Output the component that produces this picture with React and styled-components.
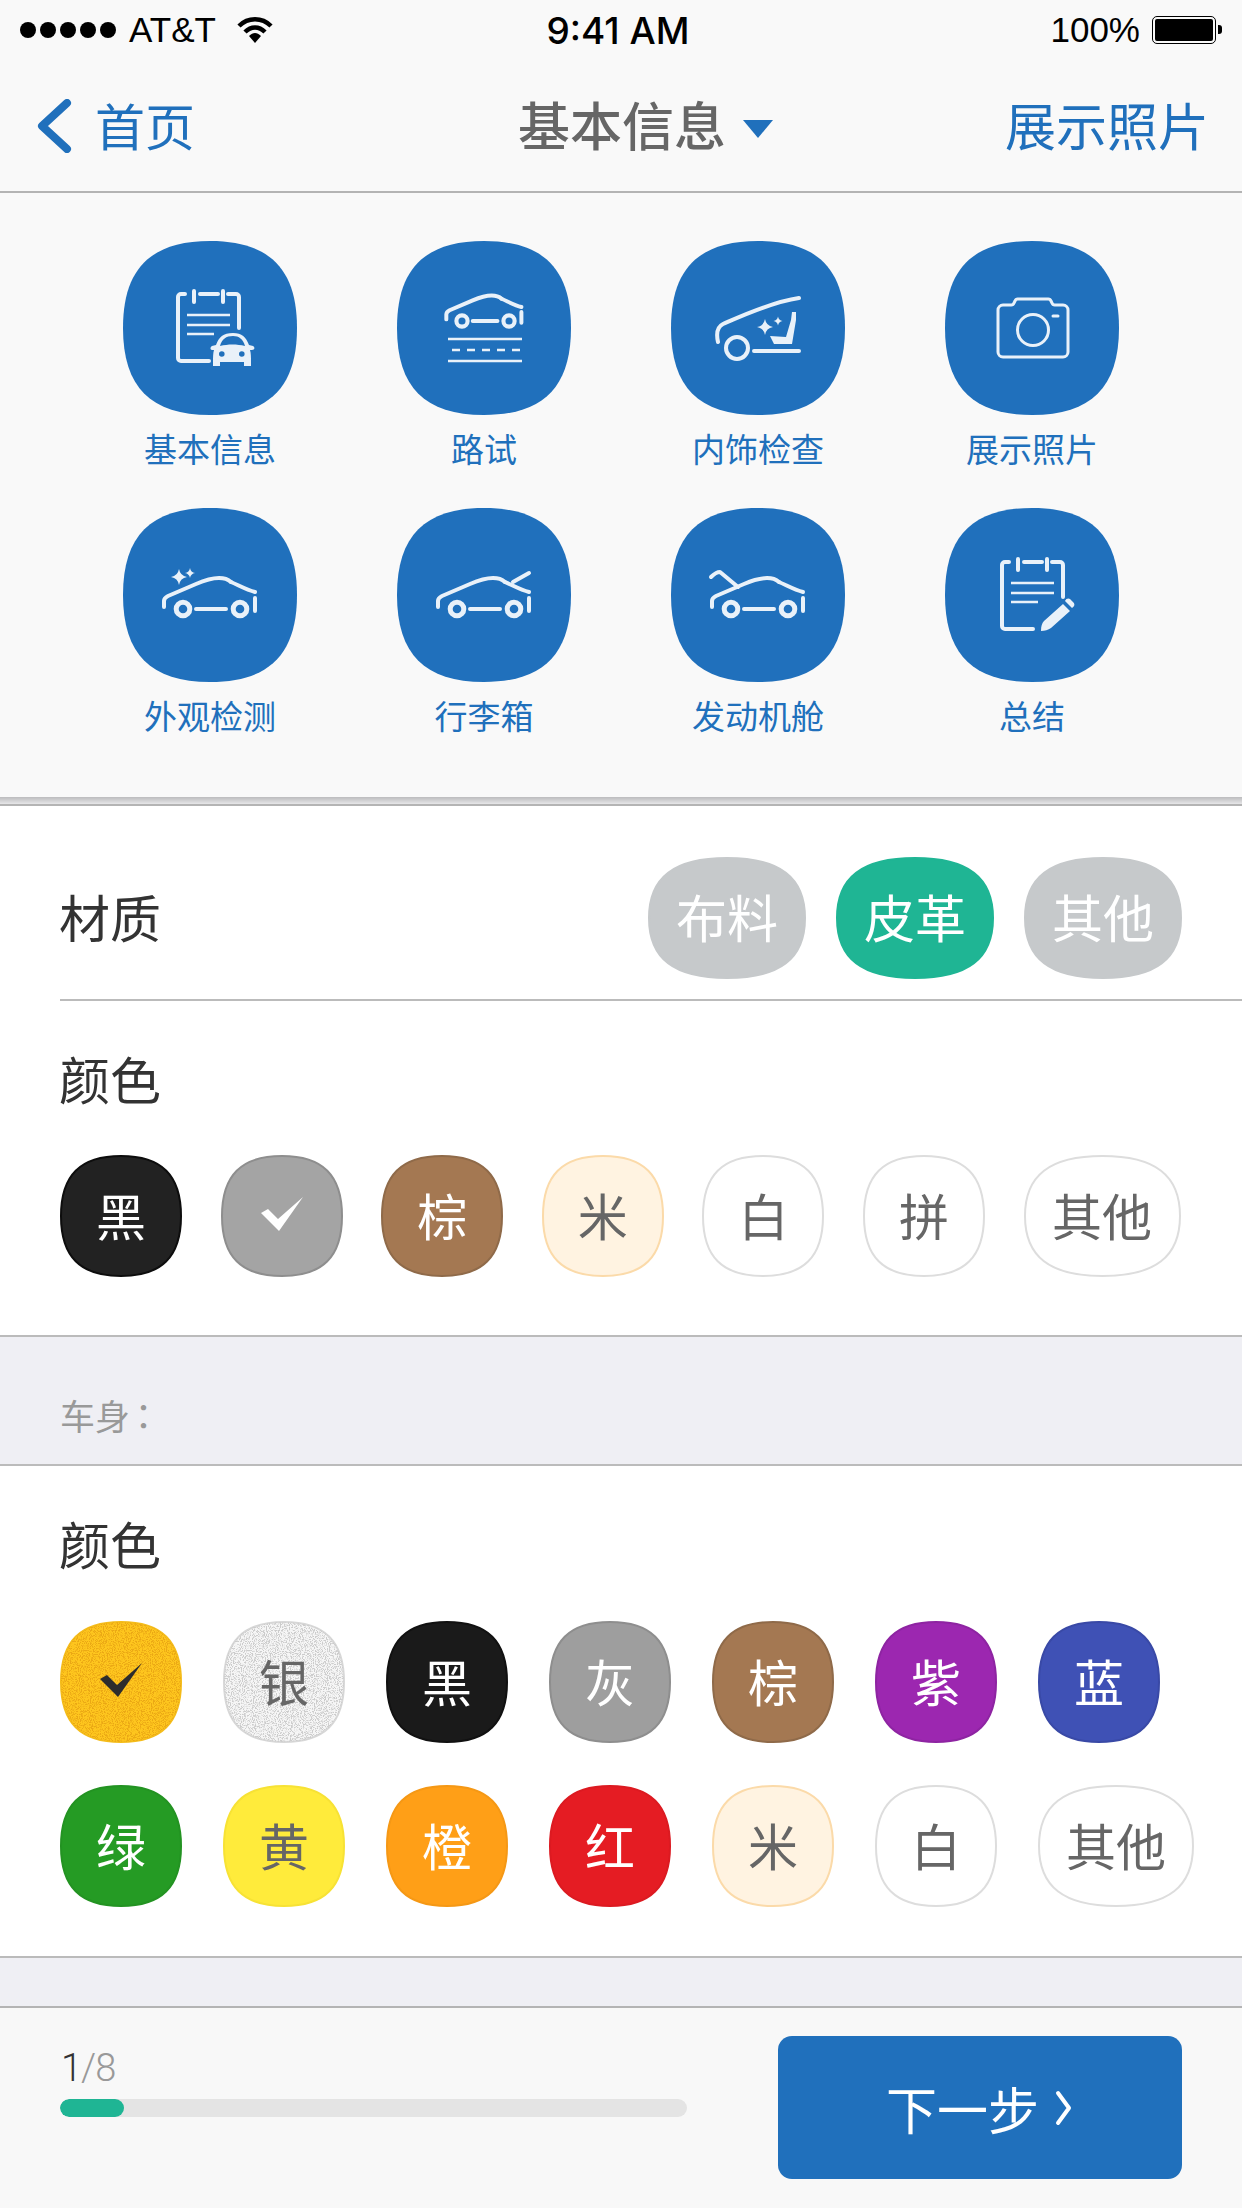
import React from "react";
import styled, { createGlobalStyle } from "styled-components";

const BLUE = "#2070bc";
const TEAL = "#1fb594";
const INK = "#e9f1f9";
const SQUIRCLE = "M50 0C84 0 100 16 100 50C100 84 84 100 50 100C16 100 0 84 0 50C0 16 16 0 50 0Z";

const GlobalStyle = createGlobalStyle`
  html, body {
    margin: 0;
    padding: 0;
    background: #fff;
  }
  * {
    box-sizing: border-box;
  }
`;

const Page = styled.div`
  width: 1242px;
  height: 2208px;
  overflow: hidden;
  background: #fff;
  display: flex;
  flex-direction: column;
  font-family: "Noto Sans CJK SC", "Liberation Sans", sans-serif;
`;

const Header = styled.div`
  background: #f9f9f9;
  border-bottom: 2px solid #b4b4b4;
`;

const StatusBar = styled.div`
  height: 60px;
  padding: 0 20px;
  display: grid;
  grid-template-columns: 1fr auto 1fr;
  align-items: center;
  font-family: "Liberation Sans", Arial, sans-serif;
  font-size: 35px;
  color: #000;
`;

const StatusLeft = styled.div`
  display: flex;
  align-items: center;
`;

const StatusRight = styled.div`
  display: flex;
  align-items: center;
  justify-content: flex-end;
  padding-right: 6px;
`;

const Dots = styled.div`
  display: flex;
  gap: 4px;
  margin-right: 13px;
`;

const Dot = styled.span`
  width: 16px;
  height: 16px;
  border-radius: 50%;
  background: #000;
`;

const Wifi = styled.svg`
  width: 38px;
  height: 28px;
  margin-left: 20px;
`;

const Time = styled.div`
  font-family: Inter, "Liberation Sans", sans-serif;
  font-weight: 500;
  font-size: 37px;
  margin-right: 6px;
`;

const Battery = styled.div`
  position: relative;
  width: 64px;
  height: 28px;
  margin-left: 12px;
  padding: 2px;
  border: 1.5px solid #000;
  border-radius: 5px;
  &::after {
    content: "";
    position: absolute;
    right: -7px;
    top: 8px;
    width: 4px;
    height: 9px;
    background: #000;
    border-radius: 0 3px 3px 0;
  }
`;

const BatteryFill = styled.div`
  height: 100%;
  background: #000;
  border-radius: 2px;
`;

const NavBar = styled.div`
  height: 131px;
  padding: 0 33px 4px 35px;
  display: grid;
  grid-template-columns: 1fr auto 1fr;
  align-items: center;
  font-size: 50px;
  line-height: 70px;
`;

const BackLink = styled.div`
  display: flex;
  align-items: center;
  gap: 22px;
  color: ${BLUE};
`;

const BackChevron = styled.svg`
  width: 38px;
  height: 54px;
  margin-top: 4px;
`;

const Title = styled.div`
  position: relative;
  color: #666;
  font-weight: 500;
  font-size: 52px;
  &::after {
    content: "";
    position: absolute;
    left: calc(100% + 17px);
    top: 31px;
    border-style: solid;
    border-width: 18px 15px 0;
    border-color: ${BLUE} transparent transparent;
  }
`;

const NavAction = styled.div`
  justify-self: end;
  color: ${BLUE};
  font-size: 51px;
`;

const Panel = styled.div`
  height: 604px;
  padding: 48px 0 0 73px;
  background: #f9f9f9;
  display: grid;
  grid-template-columns: repeat(4, 274px);
  grid-auto-rows: 267px;
`;

const PanelItem = styled.div`
  display: flex;
  flex-direction: column;
  align-items: center;
`;

const IconTile = styled.div`
  position: relative;
  width: 174px;
  height: 174px;
`;

const Shape = styled.svg`
  position: absolute;
  inset: 0;
  width: 100%;
  height: 100%;
  overflow: visible;
`;

const TileShape = styled(Shape)`
  inset: 1px;
  width: calc(100% - 2px);
  height: calc(100% - 2px);
`;

const Glyph = styled.svg`
  position: absolute;
  inset: 0;
  width: 100%;
  height: 100%;
  fill: none;
  stroke: ${INK};
  stroke-width: 4;
  stroke-linecap: round;
  stroke-linejoin: round;
`;

const Thin = styled.g`
  stroke-width: 2.7;
  stroke-linecap: butt;
`;

const Solid = styled.g`
  fill: ${INK};
  stroke: none;
`;

const PanelLabel = styled.div`
  margin-top: 11px;
  font-size: 33px;
  line-height: 44px;
  color: ${BLUE};
`;

const PanelShadow = styled.div`
  height: 9px;
  background: linear-gradient(#bcbcbe, #e6e6e8);
  border-bottom: 2px solid #b4b4b4;
`;

const MaterialRow = styled.div`
  height: 195px;
  margin-left: 60px;
  padding: 51px 60px 0 0;
  border-bottom: 2px solid #bbb;
  display: flex;
  align-items: flex-start;
  justify-content: space-between;
`;

const RowLabel = styled.div`
  margin-left: -1px;
  font-size: 51px;
  line-height: 118px;
  color: #333;
`;

const Pills = styled.div`
  display: flex;
  gap: 30px;
`;

const Tile = styled.div`
  position: relative;
  flex: none;
  width: ${(p) => p.$width}px;
  height: 122px;
  padding-bottom: 4px;
  display: flex;
  align-items: center;
  justify-content: center;
  font-size: ${(p) => p.$size}px;
  line-height: 70px;
  color: ${(p) => p.$text};
`;

const TileFill = styled.path`
  fill: ${(p) => p.$fill};
  stroke: ${(p) => p.$border};
  stroke-width: 2px;
  vector-effect: non-scaling-stroke;
`;

const TileText = styled.span`
  position: relative;
`;

const Check = styled.svg`
  position: relative;
  width: 42px;
  height: 34px;
`;

const ColorSection = styled.div`
  height: ${(p) => p.$height}px;
  padding: 42px 0 0 60px;
  border-bottom: 2px solid #bbb;
`;

const SectionTitle = styled.div`
  margin-left: -1px;
  font-size: 51px;
  line-height: 70px;
  color: #333;
`;

const SwatchGrid = styled.div`
  margin-top: ${(p) => p.$top}px;
  display: flex;
  flex-direction: column;
  gap: 42px;
`;

const SwatchRow = styled.div`
  display: flex;
  gap: ${(p) => p.$gap}px;
`;

const GroupHeader = styled.div`
  height: 129px;
  padding: 48px 0 0 60px;
  background: #efeff4;
  border-bottom: 2px solid #bbb;
  font-size: 35px;
  line-height: 60px;
  color: #999;
`;

const GroupColon = styled.span`
  margin-left: -4px;
  font-family: "Noto Sans CJK TC", sans-serif;
`;

const Spacer = styled.div`
  height: 50px;
  background: #efeff4;
  border-bottom: 2px solid #b4b4b4;
`;

const Footer = styled.div`
  flex: 1;
  padding: 28px 60px 0;
  background: #f8f8f8;
  display: flex;
  justify-content: space-between;
  align-items: flex-start;
`;

const Progress = styled.div`
  width: 627px;
  padding-top: 6px;
`;

const Counter = styled.div`
  font-family: Roboto, "Liberation Sans", sans-serif;
  font-weight: 300;
  font-size: 38px;
  line-height: 52px;
  letter-spacing: -1px;
  padding-left: 1px;
  color: #999;
`;

const CounterNow = styled.span`
  color: #333;
`;

const Track = styled.div`
  height: 18px;
  margin-top: 5px;
  border-radius: 9px;
  background: #e4e4e4;
  overflow: hidden;
`;

const TrackFill = styled.div`
  height: 100%;
  border-radius: 9px;
  background: ${TEAL};
`;

const NextButton = styled.div`
  width: 404px;
  height: 143px;
  border-radius: 14px;
  background: ${BLUE};
  color: #fff;
  display: flex;
  align-items: center;
  justify-content: center;
  gap: 14px;
  font-size: 51px;
`;

const Sparkle = ({ x, y, r }) => (
  <path
    d={`M${x} ${y - r}Q${x + r * 0.15} ${y - r * 0.15} ${x + r} ${y}Q${x + r * 0.15} ${y + r * 0.15} ${x} ${y + r}Q${x - r * 0.15} ${y + r * 0.15} ${x - r} ${y}Q${x - r * 0.15} ${y - r * 0.15} ${x} ${y - r}Z`}
  />
);

const Notepad = ({ x = 0, y = 0, bottom, right }) => (
  <g transform={`translate(${x} ${y})`}>
    <path d={`M62 53H58a3 3 0 0 0-3 3V117a3 3 0 0 0 3 3H${bottom}`} />
    <path d={`M105 53H113a3 3 0 0 1 3 3V${right}`} />
    <path d="M77 53H95M71 50V61M100 50V61" />
    <Thin>
      <path d="M64 74H107M64 84H107M64 93H91" />
    </Thin>
  </g>
);

const CarBody = ({ roofEnd = "M108 74C117 78 124 82 132 84" }) => (
  <>
    <path d="M41 99V93C41 90 43 89 45 88L73 76C87 70 100 67 108 74" />
    <path d={roofEnd} />
    <path d="M132 90V103M73 101H103" />
    <circle cx="60" cy="101" r="6.8" strokeWidth="5" />
    <circle cx="117" cy="101" r="6.8" strokeWidth="5" />
  </>
);

const icons = {
  info: (
    <>
      <Notepad bottom={86} right={87} />
      <Solid>
        <path
          fillRule="evenodd"
          d="M110 92C119 92 123 96 126 104L130 105C132 106 132 109 129 109L127 109C128 112 128 116 128 122V125H121V121H97V125H90V122C90 116 90 112 91 109L89 109C87 109 87 106 89 105L93 104C96 96 100 92 110 92ZM110 95C103 95 99 98 97 105C105 103 114 103 122 105C120 98 116 95 110 95ZM96 113a2.8 2.8 0 1 0 5.6 0a2.8 2.8 0 1 0-5.6 0ZM116 113a2.8 2.8 0 1 0 5.6 0a2.8 2.8 0 1 0-5.6 0Z"
        />
      </Solid>
    </>
  ),
  road: (
    <>
      <g transform="translate(15.5 -3.3) scale(0.825)" strokeWidth="4.8">
        <CarBody />
      </g>
      <Thin>
        <path d="M51 98H125M51 120H125M55 109H63M70 109H78M85 109H93M100 109H108M115 109H123" />
      </Thin>
    </>
  ),
  interior: (
    <>
      <path d="M47 101C45 92 46 86 52 83C68 76 100 61 128 57M83 110H128" />
      <circle cx="66" cy="107" r="11" />
      <Solid>
        <path d="M99 95L115 96L120 79L121 71H125L125 79L121 103H103Z" />
        <Sparkle x={94} y={86} r={8} />
        <Sparkle x={107} y={80} r={4.5} />
      </Solid>
    </>
  ),
  camera: (
    <g strokeWidth="3">
      <path d="M58 64H66a3 3 0 0 0 3-2l1-2a3 3 0 0 1 3-2H103a3 3 0 0 1 3 2l1 2a3 3 0 0 0 3 2H118a5 5 0 0 1 5 5V111a5 5 0 0 1-5 5H58a5 5 0 0 1-5-5V69a5 5 0 0 1 5-5Z" />
      <circle cx="88" cy="89" r="15.5" />
      <path d="M108 75H113" />
    </g>
  ),
  exterior: (
    <>
      <CarBody />
      <Solid>
        <Sparkle x={56} y={69} r={8} />
        <Sparkle x={67} y={65} r={5} />
      </Solid>
    </>
  ),
  trunk: (
    <>
      <CarBody />
      <path d="M116 74L132 65" />
    </>
  ),
  engine: (
    <>
      <CarBody />
      <path d="M40 69C43 66 46 64 49 64L67 79" />
    </>
  ),
  summary: (
    <>
      <Notepad x={2} y={1} bottom={86} right={88} />
      <Solid>
        <path d="M96 123C96 118 97 115 99 113L118 96L125 103L106 120C103 122 100 123 96 123ZM120 93C121 90 124 90 125 91L128 94C130 96 130 98 127 100Z" />
      </Solid>
    </>
  ),
};

const panelItems = [
  ["info", "基本信息"],
  ["road", "路试"],
  ["interior", "内饰检查"],
  ["camera", "展示照片"],
  ["exterior", "外观检测"],
  ["trunk", "行李箱"],
  ["engine", "发动机舱"],
  ["summary", "总结"],
];

const grainColors = {
  amber: "0 0 0 0 0.92  0 0 0 0 0.66  0 0 0 0 0.08",
  silver: "0 0 0 0 0.8  0 0 0 0 0.8  0 0 0 0 0.8",
};

const Grain = ({ id, colors }) => (
  <filter id={id} x="0" y="0" width="100%" height="100%" colorInterpolationFilters="sRGB">
    <feTurbulence type="fractalNoise" baseFrequency="1.1" numOctaves="2" seed="4" />
    <feColorMatrix values={`${colors}  0 0 0 6 -2.8`} />
    <feComposite in2="SourceAlpha" operator="in" />
  </filter>
);

const Swatch = ({ label, check, fill, border, text = "#fff", width = 122, size = 50, grain }) => (
  <Tile $width={width} $size={size} $text={text}>
    <TileShape viewBox="0 0 100 100" preserveAspectRatio="none">
      <TileFill d={SQUIRCLE} $fill={fill} $border={border} />
      {grain && (
        <>
          <Grain id={`grain-${grain}`} colors={grainColors[grain]} />
          <path d={SQUIRCLE} fill="#000" filter={`url(#grain-${grain})`} />
        </>
      )}
    </TileShape>
    {check ? (
      <Check viewBox="0 0 42 34">
        <polygon points="0,16 7,12 17,22 42,0 18,34" fill={check} />
      </Check>
    ) : (
      <TileText>{label}</TileText>
    )}
  </Tile>
);

const WHITE = { fill: "#fff", border: "#dddddd", text: "#666" };
const BEIGE = { fill: "#fff3e1", border: "#fbdaa9", text: "#666" };
const BROWN = { fill: "#a47852", border: "#8f6a49" };

const interiorColors = [
  { label: "黑", fill: "#222", border: "#0d0d0d" },
  { check: "#fff", fill: "#a4a4a4", border: "#8e8e8e" },
  { label: "棕", ...BROWN },
  { label: "米", ...BEIGE },
  { label: "白", ...WHITE },
  { label: "拼", ...WHITE },
  { label: "其他", width: 157, ...WHITE },
];

const bodyColors = [
  [
    { check: "#2d2d2d", fill: "#fec61e", border: "#f5bd1b", grain: "amber" },
    { label: "银", fill: "#f6f6f6", border: "#d8d8d8", text: "#666", grain: "silver" },
    { label: "黑", fill: "#1a1a1a", border: "#111" },
    { label: "灰", fill: "#9e9e9e", border: "#8e8e8e" },
    { label: "棕", ...BROWN },
    { label: "紫", fill: "#9c27b0", border: "#8e24a2" },
    { label: "蓝", fill: "#3f51b5", border: "#3949a6" },
  ],
  [
    { label: "绿", fill: "#259b24", border: "#239322" },
    { label: "黄", fill: "#ffeb3b", border: "#f7e235", text: "#666" },
    { label: "橙", fill: "#ff9f17", border: "#f59815" },
    { label: "红", fill: "#e51c23", border: "#dc1a21" },
    { label: "米", ...BEIGE },
    { label: "白", ...WHITE },
    { label: "其他", width: 156, ...WHITE },
  ],
];

const materials = [
  { label: "布料", fill: "#c6c9cb" },
  { label: "皮革", fill: TEAL },
  { label: "其他", fill: "#c6c9cb" },
];

export default function App() {
  const step = 1;
  const total = 8;
  return (
    <Page>
      <GlobalStyle />
      <Header>
        <StatusBar>
          <StatusLeft>
            <Dots>
              {[0, 1, 2, 3, 4].map((i) => (
                <Dot key={i} />
              ))}
            </Dots>
            AT&amp;T
            <Wifi viewBox="0 0 38 28">
              <path d="M3 10C12 1 26 1 35 10" fill="none" stroke="#000" strokeWidth="4.5" />
              <path d="M9 16C15 10 23 10 29 16" fill="none" stroke="#000" strokeWidth="4.5" />
              <path d="M13 20C17 16 21 16 25 20L19 27Z" fill="#000" />
            </Wifi>
          </StatusLeft>
          <Time>9:41 AM</Time>
          <StatusRight>
            100%
            <Battery>
              <BatteryFill />
            </Battery>
          </StatusRight>
        </StatusBar>
        <NavBar>
          <BackLink>
            <BackChevron viewBox="0 0 38 54">
              <path d="M32 4L7 27L32 50" fill="none" stroke={BLUE} strokeWidth="8" strokeLinecap="round" strokeLinejoin="round" />
            </BackChevron>
            首页
          </BackLink>
          <Title>基本信息</Title>
          <NavAction>展示照片</NavAction>
        </NavBar>
      </Header>

      <Panel>
        {panelItems.map(([icon, label]) => (
          <PanelItem key={label}>
            <IconTile>
              <Shape viewBox="0 0 100 100" preserveAspectRatio="none">
                <path d={SQUIRCLE} fill={BLUE} />
              </Shape>
              <Glyph viewBox="0 0 174 174">{icons[icon]}</Glyph>
            </IconTile>
            <PanelLabel>{label}</PanelLabel>
          </PanelItem>
        ))}
      </Panel>
      <PanelShadow />

      <MaterialRow>
        <RowLabel>材质</RowLabel>
        <Pills>
          {materials.map((m) => (
            <Swatch key={m.label} label={m.label} fill={m.fill} border={m.fill} width={158} size={51} />
          ))}
        </Pills>
      </MaterialRow>

      <ColorSection $height={336}>
        <SectionTitle>颜色</SectionTitle>
        <SwatchGrid $top={42}>
          <SwatchRow $gap={38.6}>
            {interiorColors.map((c, i) => (
              <Swatch key={i} {...c} />
            ))}
          </SwatchRow>
        </SwatchGrid>
      </ColorSection>

      <GroupHeader>
        车身<GroupColon>：</GroupColon>
      </GroupHeader>

      <ColorSection $height={492}>
        <SectionTitle>颜色</SectionTitle>
        <SwatchGrid $top={43}>
          {bodyColors.map((row, r) => (
            <SwatchRow key={r} $gap={41}>
              {row.map((c, i) => (
                <Swatch key={i} {...c} />
              ))}
            </SwatchRow>
          ))}
        </SwatchGrid>
      </ColorSection>

      <Spacer />

      <Footer>
        <Progress>
          <Counter>
            <CounterNow>{step}</CounterNow>/{total}
          </Counter>
          <Track>
            <TrackFill style={{ width: `${(step / total) * 82}%` }} />
          </Track>
        </Progress>
        <NextButton>
          下一步
          <svg width="21" height="36" viewBox="0 0 21 36">
            <path d="M5 3L16 18L5 33" fill="none" stroke="#fff" strokeWidth="4" strokeLinecap="round" strokeLinejoin="round" />
          </svg>
        </NextButton>
      </Footer>
    </Page>
  );
}
